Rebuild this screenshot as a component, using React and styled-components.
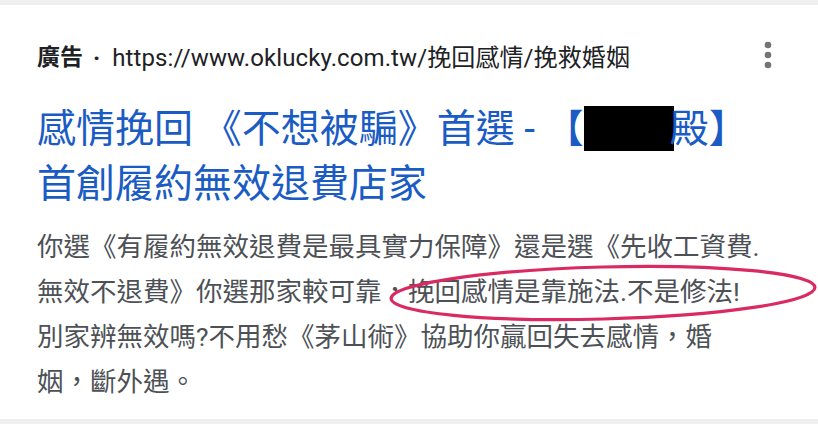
import React from "react";
import styled, { createGlobalStyle } from "styled-components";

const GlobalStyle = createGlobalStyle`
  html, body {
    margin: 0;
    padding: 0;
    background: #efefef;
  }
  body {
    font-family: Roboto, "Noto Sans CJK TC", sans-serif;
  }
`

const Page = styled.div`
  width: 818px;
  height: 424px;
  padding: 5px 0;
  box-sizing: border-box;
  background: #efefef;
`

const Card = styled.section`
  position: relative;
  height: 100%;
  background: #fff;
  padding: 0 0 0 37px;
  box-sizing: border-box;
  display: flex;
  flex-direction: column;
`

const AdRow = styled.div`
  height: 36px;
  margin-top: 32px;
  display: flex;
  align-items: center;
  font-size: 24px;
  color: #202124;
  white-space: nowrap;
`

const AdLabel = styled.span`
  font-weight: 700;
  font-size: 23px;
`

const Sep = styled.span`
  margin: 6px 12px 0 10px;
  font-weight: 700;
`

const Url = styled.span`
  letter-spacing: 0.1px;
`

const MenuButton = styled.button`
  margin-left: auto;
  margin-right: 38px;
  width: 24px;
  height: 36px;
  border: 0;
  padding: 0;
  background: none;
  display: flex;
  align-items: center;
  justify-content: center;
`

const Title = styled.h3`
  margin: 29px 0 0;
  font-size: 39px;
  font-weight: 400;
  line-height: 55px;
  color: #1a5bc4;
  white-space: nowrap;
`

const Redacted = styled.span`
  display: inline-block;
  width: 90px;
  height: 45px;
  background: #000;
  vertical-align: -9px;
  margin: 0 -4px 0 0;
`

const Snippet = styled.p`
  margin: 12px 0 0;
  font-size: 26.5px;
  line-height: 45px;
  color: #4d5156;
  white-space: nowrap;
`

const Circle = styled.svg`
  position: absolute;
  left: 0;
  top: 0;
  pointer-events: none;
`

function Dots() {
  return (
    <svg width="8" height="28" viewBox="0 0 8 28">
      <circle cx="4" cy="4" r="3.3" fill="#70757a" />
      <circle cx="4" cy="14" r="3.3" fill="#70757a" />
      <circle cx="4" cy="24" r="3.3" fill="#70757a" />
    </svg>
  )
}

export default function App() {
  return (
    <Page>
      <GlobalStyle />
      <Card>
        <AdRow>
          <AdLabel>廣告</AdLabel>
          <Sep>·</Sep>
          <Url>https://www.oklucky.com.tw/挽回感情/挽救婚姻</Url>
          <MenuButton aria-label="more">
            <Dots />
          </MenuButton>
        </AdRow>
        <Title>
          感情挽回 《不想被騙》首選 - 【<Redacted />殿】
          <br />
          首創履約無效退費店家
        </Title>
        <Snippet>
          你選《有履約無效退費是最具實力保障》還是選《先收工資費.
          <br />
          無效不退費》你選那家較可靠，挽回感情是靠施法.不是修法!
          <br />
          別家辨無效嗎?不用愁《茅山術》協助你贏回失去感情，婚
          <br />
          姻，斷外遇。
        </Snippet>
        <Circle width="818" height="414" viewBox="0 5 818 414">
          <ellipse
            cx="603"
            cy="293"
            rx="212"
            ry="26"
            transform="rotate(-1.5 603 293)"
            fill="none"
            stroke="#d92a62"
            strokeWidth="3.2"
          />
        </Circle>
      </Card>
    </Page>
  )
}
